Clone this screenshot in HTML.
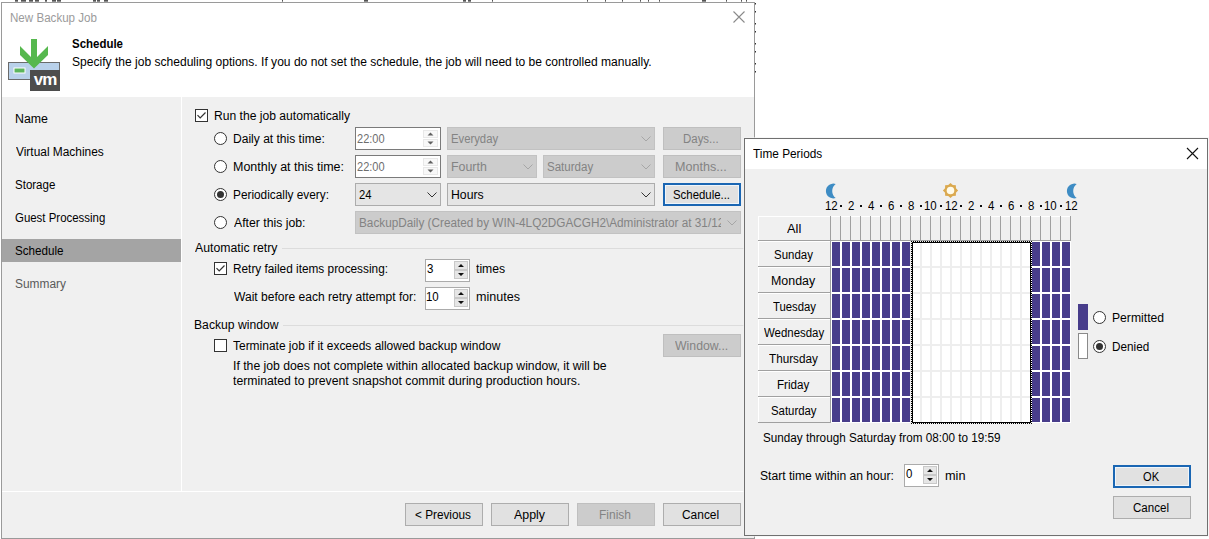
<!DOCTYPE html>
<html><head><meta charset="utf-8"><style>
html,body{margin:0;padding:0;width:1209px;height:539px;overflow:hidden;background:#fff;position:relative}
div{position:absolute;box-sizing:border-box}
svg{display:block}
.t{font-family:"Liberation Sans", sans-serif;font-size:12px;line-height:15px;white-space:pre;transform-origin:0 0}
</style></head><body>
<div style="left:15px;top:0px;width:3px;height:1px;background:#555"></div>
<div style="left:15px;top:1px;width:3px;height:1px;background:#8a8a8a"></div>
<div style="left:21px;top:0px;width:5px;height:1px;background:#555"></div>
<div style="left:21px;top:1px;width:5px;height:1px;background:#8a8a8a"></div>
<div style="left:29px;top:0px;width:4px;height:1px;background:#555"></div>
<div style="left:29px;top:1px;width:4px;height:1px;background:#8a8a8a"></div>
<div style="left:35px;top:0px;width:4px;height:1px;background:#555"></div>
<div style="left:35px;top:1px;width:4px;height:1px;background:#8a8a8a"></div>
<div style="left:45px;top:0px;width:2px;height:1px;background:#555"></div>
<div style="left:45px;top:1px;width:2px;height:1px;background:#8a8a8a"></div>
<div style="left:52px;top:0px;width:4px;height:1px;background:#555"></div>
<div style="left:52px;top:1px;width:4px;height:1px;background:#8a8a8a"></div>
<div style="left:57px;top:0px;width:4px;height:1px;background:#555"></div>
<div style="left:57px;top:1px;width:4px;height:1px;background:#8a8a8a"></div>
<div style="left:93px;top:0px;width:3px;height:1px;background:#555"></div>
<div style="left:93px;top:1px;width:3px;height:1px;background:#8a8a8a"></div>
<div style="left:97px;top:0px;width:3px;height:1px;background:#555"></div>
<div style="left:97px;top:1px;width:3px;height:1px;background:#8a8a8a"></div>
<div style="left:104px;top:0px;width:4px;height:1px;background:#555"></div>
<div style="left:104px;top:1px;width:4px;height:1px;background:#8a8a8a"></div>
<div style="left:282px;top:0px;width:1px;height:1px;background:#555"></div>
<div style="left:282px;top:1px;width:1px;height:1px;background:#8a8a8a"></div>
<div style="left:364px;top:0px;width:4px;height:1px;background:#555"></div>
<div style="left:364px;top:1px;width:4px;height:1px;background:#8a8a8a"></div>
<div style="left:463px;top:0px;width:3px;height:1px;background:#555"></div>
<div style="left:463px;top:1px;width:3px;height:1px;background:#8a8a8a"></div>
<div style="left:468px;top:0px;width:3px;height:1px;background:#555"></div>
<div style="left:468px;top:1px;width:3px;height:1px;background:#8a8a8a"></div>
<div style="left:492px;top:0px;width:1px;height:1px;background:#555"></div>
<div style="left:492px;top:1px;width:1px;height:1px;background:#8a8a8a"></div>
<div style="left:587px;top:0px;width:1px;height:1px;background:#555"></div>
<div style="left:587px;top:1px;width:1px;height:1px;background:#8a8a8a"></div>
<div style="left:605px;top:0px;width:1px;height:1px;background:#555"></div>
<div style="left:605px;top:1px;width:1px;height:1px;background:#8a8a8a"></div>
<div style="left:622px;top:0px;width:1px;height:1px;background:#555"></div>
<div style="left:622px;top:1px;width:1px;height:1px;background:#8a8a8a"></div>
<div style="left:640px;top:0px;width:1px;height:1px;background:#555"></div>
<div style="left:640px;top:1px;width:1px;height:1px;background:#8a8a8a"></div>
<div style="left:648px;top:0px;width:1px;height:1px;background:#555"></div>
<div style="left:648px;top:1px;width:1px;height:1px;background:#8a8a8a"></div>
<div style="left:659px;top:0px;width:1px;height:1px;background:#555"></div>
<div style="left:659px;top:1px;width:1px;height:1px;background:#8a8a8a"></div>
<div style="left:702px;top:0px;width:4px;height:1px;background:#555"></div>
<div style="left:702px;top:1px;width:4px;height:1px;background:#8a8a8a"></div>
<div style="left:726px;top:0px;width:1px;height:1px;background:#555"></div>
<div style="left:726px;top:1px;width:1px;height:1px;background:#8a8a8a"></div>
<div style="left:741px;top:0px;width:1px;height:1px;background:#555"></div>
<div style="left:741px;top:1px;width:1px;height:1px;background:#8a8a8a"></div>
<div style="left:746px;top:0px;width:1px;height:1px;background:#555"></div>
<div style="left:746px;top:1px;width:1px;height:1px;background:#8a8a8a"></div>
<div style="left:1px;top:2px;width:754px;height:537px;background:#fff;border:1px solid #9a9a9a"></div>
<div style="left:755px;top:3px;width:1px;height:1px;background:#333"></div>
<div style="left:755px;top:4px;width:1px;height:1px;background:#999"></div>
<div style="left:755px;top:11px;width:1px;height:1px;background:#333"></div>
<div style="left:755px;top:12px;width:1px;height:1px;background:#999"></div>
<div style="left:755px;top:23px;width:1px;height:1px;background:#333"></div>
<div style="left:755px;top:24px;width:1px;height:1px;background:#999"></div>
<div style="left:755px;top:31px;width:1px;height:1px;background:#333"></div>
<div style="left:755px;top:32px;width:1px;height:1px;background:#999"></div>
<div style="left:755px;top:43px;width:1px;height:1px;background:#333"></div>
<div style="left:755px;top:44px;width:1px;height:1px;background:#999"></div>
<div style="left:755px;top:51px;width:1px;height:1px;background:#333"></div>
<div style="left:755px;top:52px;width:1px;height:1px;background:#999"></div>
<div style="left:755px;top:63px;width:1px;height:1px;background:#333"></div>
<div style="left:755px;top:64px;width:1px;height:1px;background:#999"></div>
<div style="left:755px;top:71px;width:1px;height:1px;background:#333"></div>
<div style="left:755px;top:72px;width:1px;height:1px;background:#999"></div>
<div style="left:2px;top:97px;width:752px;height:441px;background:#f0f0f0"></div>
<div style="left:181px;top:97px;width:1px;height:394px;background:#fff"></div>
<div style="left:2px;top:491px;width:752px;height:1px;background:#fff"></div>
<div style="left:2px;top:239px;width:179px;height:23px;background:#a4a4a4"></div>
<svg style="position:absolute;left:732px;top:10px" width="14" height="14"><path d="M1.5 1.5L12.5 12.5M12.5 1.5L1.5 12.5" stroke="#8a8a8a" stroke-width="1.1" fill="none"/></svg>
<svg style="position:absolute;left:0;top:30px" width="70" height="66" viewBox="0 30 70 66">
<rect x="8.5" y="62.5" width="51" height="17" fill="#b9d1ea" stroke="#6b6b6b" stroke-width="1"/>
<rect x="14" y="68" width="11" height="5" fill="#5cb55c" stroke="#fff" stroke-width="1"/>
<rect x="30" y="70" width="30" height="21" fill="#4d4d4d"/>
<text x="45" y="85" font-family="Liberation Sans" font-weight="bold" font-size="17" fill="#fff" text-anchor="middle" letter-spacing="-1">vm</text>
<path d="M31 39H37V57L48 46V55L34 68.5L20 55V46L31 57Z" fill="#56b84e"/>
</svg>
<svg style="position:absolute;left:195px;top:109px" width="13" height="13"><rect x="0.5" y="0.5" width="12" height="12" fill="#fff" stroke="#333" stroke-width="1"/><path d="M2.5 6.2L5.2 9L10.5 3.5" stroke="#333" stroke-width="1.2" fill="none"/></svg>
<svg style="position:absolute;left:214px;top:132px" width="13" height="13"><circle cx="6.5" cy="6.5" r="6" fill="#fff" stroke="#333" stroke-width="1"/></svg>
<svg style="position:absolute;left:214px;top:160px" width="13" height="13"><circle cx="6.5" cy="6.5" r="6" fill="#fff" stroke="#333" stroke-width="1"/></svg>
<svg style="position:absolute;left:214px;top:188px" width="13" height="13"><circle cx="6.5" cy="6.5" r="6" fill="#fff" stroke="#333" stroke-width="1"/><circle cx="6.5" cy="6.5" r="3.5" fill="#333"/></svg>
<svg style="position:absolute;left:214px;top:216px" width="13" height="13"><circle cx="6.5" cy="6.5" r="6" fill="#fff" stroke="#333" stroke-width="1"/></svg>
<div style="left:355px;top:127px;width:86px;height:23px;background:#fff;border:1px solid #7a7a7a"></div>
<div style="left:423px;top:130px;width:15px;height:8px;background:#f8f8f8;border:1px solid #e8e8e8"></div>
<div style="left:423px;top:139px;width:15px;height:8px;background:#f8f8f8;border:1px solid #e8e8e8"></div>
<svg style="position:absolute;left:0;top:0" width="1209" height="539"><path d="M427.5 135.5L430.5 132.5L433.5 135.5Z M427.5 141.5L430.5 144.5L433.5 141.5Z" fill="#606060"/></svg>
<div style="left:355px;top:155px;width:86px;height:23px;background:#fff;border:1px solid #7a7a7a"></div>
<div style="left:423px;top:158px;width:15px;height:8px;background:#f8f8f8;border:1px solid #e8e8e8"></div>
<div style="left:423px;top:167px;width:15px;height:8px;background:#f8f8f8;border:1px solid #e8e8e8"></div>
<svg style="position:absolute;left:0;top:0" width="1209" height="539"><path d="M427.5 163.5L430.5 160.5L433.5 163.5Z M427.5 169.5L430.5 172.5L433.5 169.5Z" fill="#606060"/></svg>
<div style="left:447px;top:127px;width:208px;height:23px;background:#cccccc;border:1px solid #c2c2c2"></div>
<svg style="position:absolute;left:641px;top:136px" width="10" height="6"><path d="M0.5 0.5L5 5L9.5 0.5" stroke="#a6a6a6" stroke-width="1" fill="none"/></svg>
<div style="left:663px;top:127px;width:78px;height:23px;background:#cccccc;border:1px solid #bfbfbf"></div>
<div style="left:447px;top:155px;width:90px;height:23px;background:#cccccc;border:1px solid #c2c2c2"></div>
<svg style="position:absolute;left:523px;top:164px" width="10" height="6"><path d="M0.5 0.5L5 5L9.5 0.5" stroke="#a6a6a6" stroke-width="1" fill="none"/></svg>
<div style="left:543px;top:155px;width:112px;height:23px;background:#cccccc;border:1px solid #c2c2c2"></div>
<svg style="position:absolute;left:641px;top:164px" width="10" height="6"><path d="M0.5 0.5L5 5L9.5 0.5" stroke="#a6a6a6" stroke-width="1" fill="none"/></svg>
<div style="left:663px;top:155px;width:78px;height:23px;background:#cccccc;border:1px solid #bfbfbf"></div>
<div style="left:355px;top:183px;width:86px;height:23px;background:#e5e5e5;border:1px solid #acacac"></div>
<svg style="position:absolute;left:427px;top:192px" width="10" height="6"><path d="M0.5 0.5L5 5L9.5 0.5" stroke="#333" stroke-width="1" fill="none"/></svg>
<div style="left:447px;top:183px;width:208px;height:23px;background:#e5e5e5;border:1px solid #acacac"></div>
<svg style="position:absolute;left:641px;top:192px" width="10" height="6"><path d="M0.5 0.5L5 5L9.5 0.5" stroke="#333" stroke-width="1" fill="none"/></svg>
<div style="left:663px;top:183px;width:78px;height:23px;background:#e5f1fb;border:2px solid #1a66b3"></div>
<div style="left:665px;top:185px;width:74px;height:19px;background:#e1e1e1;border:1px solid #eef5fb"></div>
<div style="left:355px;top:211px;width:386px;height:23px;background:#cccccc;border:1px solid #c2c2c2"></div>
<svg style="position:absolute;left:727px;top:220px" width="10" height="6"><path d="M0.5 0.5L5 5L9.5 0.5" stroke="#a6a6a6" stroke-width="1" fill="none"/></svg>
<div style="left:282px;top:248px;width:462px;height:1px;background:#dcdcdc"></div>
<svg style="position:absolute;left:214px;top:262px" width="13" height="13"><rect x="0.5" y="0.5" width="12" height="12" fill="#fff" stroke="#333" stroke-width="1"/><path d="M2.5 6.2L5.2 9L10.5 3.5" stroke="#333" stroke-width="1.2" fill="none"/></svg>
<div style="left:425px;top:259px;width:45px;height:23px;background:#fff;border:1px solid #ababab"></div>
<div style="left:454px;top:261px;width:14px;height:9px;background:#e6e6e6;border:1px solid #c9c9c9"></div>
<div style="left:454px;top:270px;width:14px;height:9px;background:#e6e6e6;border:1px solid #c9c9c9"></div>
<svg style="position:absolute;left:0;top:0" width="1209" height="539"><path d="M458.0 267.0L461.0 264.0L464.0 267.0Z M458.0 273.0L461.0 276.0L464.0 273.0Z" fill="#111"/></svg>
<div style="left:425px;top:287px;width:45px;height:23px;background:#fff;border:1px solid #ababab"></div>
<div style="left:454px;top:289px;width:14px;height:9px;background:#e6e6e6;border:1px solid #c9c9c9"></div>
<div style="left:454px;top:298px;width:14px;height:9px;background:#e6e6e6;border:1px solid #c9c9c9"></div>
<svg style="position:absolute;left:0;top:0" width="1209" height="539"><path d="M458.0 295.0L461.0 292.0L464.0 295.0Z M458.0 301.0L461.0 304.0L464.0 301.0Z" fill="#111"/></svg>
<div style="left:283px;top:325px;width:461px;height:1px;background:#dcdcdc"></div>
<svg style="position:absolute;left:214px;top:339px" width="13" height="13"><rect x="0.5" y="0.5" width="12" height="12" fill="#fff" stroke="#333" stroke-width="1"/></svg>
<div style="left:663px;top:334px;width:78px;height:23px;background:#cccccc;border:1px solid #bfbfbf"></div>
<div style="left:405px;top:503px;width:78px;height:23px;background:#e1e1e1;border:1px solid #adadad"></div>
<div style="left:491px;top:503px;width:78px;height:23px;background:#e1e1e1;border:1px solid #adadad"></div>
<div style="left:577px;top:503px;width:78px;height:23px;background:#cccccc;border:1px solid #bfbfbf"></div>
<div style="left:663px;top:503px;width:78px;height:23px;background:#e1e1e1;border:1px solid #adadad"></div>
<div style="left:743px;top:137px;width:466px;height:400px;background:#f4f4f4;opacity:0.6"></div>
<div style="left:744px;top:138px;width:464px;height:398px;background:#fff;border:1px solid #707070"></div>
<div style="left:745px;top:169px;width:462px;height:366px;background:#f0f0f0"></div>
<svg style="position:absolute;left:1186px;top:147px" width="13" height="13"><path d="M1 1L12 12M12 1L1 12" stroke="#111" stroke-width="1.1" fill="none"/></svg>
<div style="left:840px;top:205px;width:2px;height:2px;background:#111"></div>
<div style="left:860px;top:205px;width:2px;height:2px;background:#111"></div>
<div style="left:880px;top:205px;width:2px;height:2px;background:#111"></div>
<div style="left:900px;top:205px;width:2px;height:2px;background:#111"></div>
<div style="left:920px;top:205px;width:2px;height:2px;background:#111"></div>
<div style="left:940px;top:205px;width:2px;height:2px;background:#111"></div>
<div style="left:960px;top:205px;width:2px;height:2px;background:#111"></div>
<div style="left:980px;top:205px;width:2px;height:2px;background:#111"></div>
<div style="left:1000px;top:205px;width:2px;height:2px;background:#111"></div>
<div style="left:1020px;top:205px;width:2px;height:2px;background:#111"></div>
<div style="left:1040px;top:205px;width:2px;height:2px;background:#111"></div>
<div style="left:1060px;top:205px;width:2px;height:2px;background:#111"></div>
<svg style="position:absolute;left:824px;top:182px" width="14" height="18" viewBox="0 0 14 18"><path d="M11.7 2A7.4 7.4 0 1 0 11.7 16A8.75 8.75 0 0 1 11.7 2Z" fill="#3e8cc4"/></svg>
<svg style="position:absolute;left:1065px;top:182px" width="14" height="18" viewBox="0 0 14 18"><path d="M11.7 2A7.4 7.4 0 1 0 11.7 16A8.75 8.75 0 0 1 11.7 2Z" fill="#3e8cc4"/></svg>
<svg style="position:absolute;left:942px;top:182px" width="17" height="17" viewBox="0 0 17 17">
<polygon points="8.50,0.90 10.76,3.05 13.87,3.13 13.95,6.24 16.10,8.50 13.95,10.76 13.87,13.87 10.76,13.95 8.50,16.10 6.24,13.95 3.13,13.87 3.05,10.76 0.90,8.50 3.05,6.24 3.13,3.13 6.24,3.05" fill="#dba94f"/>
<circle cx="8.5" cy="8.5" r="3.8" fill="#fffbea"/></svg>
<div style="left:758px;top:216px;width:73px;height:207px;background:#a0a0a0"></div>
<div style="left:758px;top:216px;width:72px;height:24px;background:#f0f0f0;border-top:1px solid #fff;border-left:1px solid #fff"></div>
<div style="left:758px;top:241px;width:72px;height:25px;background:#f0f0f0;border-top:1px solid #fff;border-left:1px solid #fff"></div>
<div style="left:758px;top:267px;width:72px;height:25px;background:#f0f0f0;border-top:1px solid #fff;border-left:1px solid #fff"></div>
<div style="left:758px;top:293px;width:72px;height:25px;background:#f0f0f0;border-top:1px solid #fff;border-left:1px solid #fff"></div>
<div style="left:758px;top:319px;width:72px;height:25px;background:#f0f0f0;border-top:1px solid #fff;border-left:1px solid #fff"></div>
<div style="left:758px;top:345px;width:72px;height:25px;background:#f0f0f0;border-top:1px solid #fff;border-left:1px solid #fff"></div>
<div style="left:758px;top:371px;width:72px;height:25px;background:#f0f0f0;border-top:1px solid #fff;border-left:1px solid #fff"></div>
<div style="left:758px;top:397px;width:72px;height:25px;background:#f0f0f0;border-top:1px solid #fff;border-left:1px solid #fff"></div>
<div style="left:830px;top:216px;width:241px;height:25px;background:#f0f0f0;border-top:1px solid #fff"></div>
<div style="left:830px;top:216px;width:1px;height:25px;background:#a0a0a0"></div>
<div style="left:840px;top:216px;width:1px;height:25px;background:#a0a0a0"></div>
<div style="left:850px;top:216px;width:1px;height:25px;background:#a0a0a0"></div>
<div style="left:860px;top:216px;width:1px;height:25px;background:#a0a0a0"></div>
<div style="left:870px;top:216px;width:1px;height:25px;background:#a0a0a0"></div>
<div style="left:880px;top:216px;width:1px;height:25px;background:#a0a0a0"></div>
<div style="left:890px;top:216px;width:1px;height:25px;background:#a0a0a0"></div>
<div style="left:900px;top:216px;width:1px;height:25px;background:#a0a0a0"></div>
<div style="left:910px;top:216px;width:1px;height:25px;background:#a0a0a0"></div>
<div style="left:920px;top:216px;width:1px;height:25px;background:#a0a0a0"></div>
<div style="left:930px;top:216px;width:1px;height:25px;background:#a0a0a0"></div>
<div style="left:940px;top:216px;width:1px;height:25px;background:#a0a0a0"></div>
<div style="left:950px;top:216px;width:1px;height:25px;background:#a0a0a0"></div>
<div style="left:960px;top:216px;width:1px;height:25px;background:#a0a0a0"></div>
<div style="left:970px;top:216px;width:1px;height:25px;background:#a0a0a0"></div>
<div style="left:980px;top:216px;width:1px;height:25px;background:#a0a0a0"></div>
<div style="left:990px;top:216px;width:1px;height:25px;background:#a0a0a0"></div>
<div style="left:1000px;top:216px;width:1px;height:25px;background:#a0a0a0"></div>
<div style="left:1010px;top:216px;width:1px;height:25px;background:#a0a0a0"></div>
<div style="left:1020px;top:216px;width:1px;height:25px;background:#a0a0a0"></div>
<div style="left:1030px;top:216px;width:1px;height:25px;background:#a0a0a0"></div>
<div style="left:1040px;top:216px;width:1px;height:25px;background:#a0a0a0"></div>
<div style="left:1050px;top:216px;width:1px;height:25px;background:#a0a0a0"></div>
<div style="left:1060px;top:216px;width:1px;height:25px;background:#a0a0a0"></div>
<div style="left:1070px;top:216px;width:1px;height:25px;background:#a0a0a0"></div>
<div style="left:830px;top:240px;width:241px;height:183px;background:#fff"></div>
<div style="left:910px;top:240px;width:120px;height:183px;background:#eeeeee"></div>
<div style="left:912px;top:242px;width:8px;height:24px;background:#fff"></div>
<div style="left:922px;top:242px;width:8px;height:24px;background:#fff"></div>
<div style="left:932px;top:242px;width:8px;height:24px;background:#fff"></div>
<div style="left:942px;top:242px;width:8px;height:24px;background:#fff"></div>
<div style="left:952px;top:242px;width:8px;height:24px;background:#fff"></div>
<div style="left:962px;top:242px;width:8px;height:24px;background:#fff"></div>
<div style="left:972px;top:242px;width:8px;height:24px;background:#fff"></div>
<div style="left:982px;top:242px;width:8px;height:24px;background:#fff"></div>
<div style="left:992px;top:242px;width:8px;height:24px;background:#fff"></div>
<div style="left:1002px;top:242px;width:8px;height:24px;background:#fff"></div>
<div style="left:1012px;top:242px;width:8px;height:24px;background:#fff"></div>
<div style="left:1022px;top:242px;width:8px;height:24px;background:#fff"></div>
<div style="left:912px;top:268px;width:8px;height:24px;background:#fff"></div>
<div style="left:922px;top:268px;width:8px;height:24px;background:#fff"></div>
<div style="left:932px;top:268px;width:8px;height:24px;background:#fff"></div>
<div style="left:942px;top:268px;width:8px;height:24px;background:#fff"></div>
<div style="left:952px;top:268px;width:8px;height:24px;background:#fff"></div>
<div style="left:962px;top:268px;width:8px;height:24px;background:#fff"></div>
<div style="left:972px;top:268px;width:8px;height:24px;background:#fff"></div>
<div style="left:982px;top:268px;width:8px;height:24px;background:#fff"></div>
<div style="left:992px;top:268px;width:8px;height:24px;background:#fff"></div>
<div style="left:1002px;top:268px;width:8px;height:24px;background:#fff"></div>
<div style="left:1012px;top:268px;width:8px;height:24px;background:#fff"></div>
<div style="left:1022px;top:268px;width:8px;height:24px;background:#fff"></div>
<div style="left:912px;top:294px;width:8px;height:24px;background:#fff"></div>
<div style="left:922px;top:294px;width:8px;height:24px;background:#fff"></div>
<div style="left:932px;top:294px;width:8px;height:24px;background:#fff"></div>
<div style="left:942px;top:294px;width:8px;height:24px;background:#fff"></div>
<div style="left:952px;top:294px;width:8px;height:24px;background:#fff"></div>
<div style="left:962px;top:294px;width:8px;height:24px;background:#fff"></div>
<div style="left:972px;top:294px;width:8px;height:24px;background:#fff"></div>
<div style="left:982px;top:294px;width:8px;height:24px;background:#fff"></div>
<div style="left:992px;top:294px;width:8px;height:24px;background:#fff"></div>
<div style="left:1002px;top:294px;width:8px;height:24px;background:#fff"></div>
<div style="left:1012px;top:294px;width:8px;height:24px;background:#fff"></div>
<div style="left:1022px;top:294px;width:8px;height:24px;background:#fff"></div>
<div style="left:912px;top:320px;width:8px;height:24px;background:#fff"></div>
<div style="left:922px;top:320px;width:8px;height:24px;background:#fff"></div>
<div style="left:932px;top:320px;width:8px;height:24px;background:#fff"></div>
<div style="left:942px;top:320px;width:8px;height:24px;background:#fff"></div>
<div style="left:952px;top:320px;width:8px;height:24px;background:#fff"></div>
<div style="left:962px;top:320px;width:8px;height:24px;background:#fff"></div>
<div style="left:972px;top:320px;width:8px;height:24px;background:#fff"></div>
<div style="left:982px;top:320px;width:8px;height:24px;background:#fff"></div>
<div style="left:992px;top:320px;width:8px;height:24px;background:#fff"></div>
<div style="left:1002px;top:320px;width:8px;height:24px;background:#fff"></div>
<div style="left:1012px;top:320px;width:8px;height:24px;background:#fff"></div>
<div style="left:1022px;top:320px;width:8px;height:24px;background:#fff"></div>
<div style="left:912px;top:346px;width:8px;height:24px;background:#fff"></div>
<div style="left:922px;top:346px;width:8px;height:24px;background:#fff"></div>
<div style="left:932px;top:346px;width:8px;height:24px;background:#fff"></div>
<div style="left:942px;top:346px;width:8px;height:24px;background:#fff"></div>
<div style="left:952px;top:346px;width:8px;height:24px;background:#fff"></div>
<div style="left:962px;top:346px;width:8px;height:24px;background:#fff"></div>
<div style="left:972px;top:346px;width:8px;height:24px;background:#fff"></div>
<div style="left:982px;top:346px;width:8px;height:24px;background:#fff"></div>
<div style="left:992px;top:346px;width:8px;height:24px;background:#fff"></div>
<div style="left:1002px;top:346px;width:8px;height:24px;background:#fff"></div>
<div style="left:1012px;top:346px;width:8px;height:24px;background:#fff"></div>
<div style="left:1022px;top:346px;width:8px;height:24px;background:#fff"></div>
<div style="left:912px;top:372px;width:8px;height:24px;background:#fff"></div>
<div style="left:922px;top:372px;width:8px;height:24px;background:#fff"></div>
<div style="left:932px;top:372px;width:8px;height:24px;background:#fff"></div>
<div style="left:942px;top:372px;width:8px;height:24px;background:#fff"></div>
<div style="left:952px;top:372px;width:8px;height:24px;background:#fff"></div>
<div style="left:962px;top:372px;width:8px;height:24px;background:#fff"></div>
<div style="left:972px;top:372px;width:8px;height:24px;background:#fff"></div>
<div style="left:982px;top:372px;width:8px;height:24px;background:#fff"></div>
<div style="left:992px;top:372px;width:8px;height:24px;background:#fff"></div>
<div style="left:1002px;top:372px;width:8px;height:24px;background:#fff"></div>
<div style="left:1012px;top:372px;width:8px;height:24px;background:#fff"></div>
<div style="left:1022px;top:372px;width:8px;height:24px;background:#fff"></div>
<div style="left:912px;top:398px;width:8px;height:24px;background:#fff"></div>
<div style="left:922px;top:398px;width:8px;height:24px;background:#fff"></div>
<div style="left:932px;top:398px;width:8px;height:24px;background:#fff"></div>
<div style="left:942px;top:398px;width:8px;height:24px;background:#fff"></div>
<div style="left:952px;top:398px;width:8px;height:24px;background:#fff"></div>
<div style="left:962px;top:398px;width:8px;height:24px;background:#fff"></div>
<div style="left:972px;top:398px;width:8px;height:24px;background:#fff"></div>
<div style="left:982px;top:398px;width:8px;height:24px;background:#fff"></div>
<div style="left:992px;top:398px;width:8px;height:24px;background:#fff"></div>
<div style="left:1002px;top:398px;width:8px;height:24px;background:#fff"></div>
<div style="left:1012px;top:398px;width:8px;height:24px;background:#fff"></div>
<div style="left:1022px;top:398px;width:8px;height:24px;background:#fff"></div>
<div style="left:832px;top:242px;width:8px;height:24px;background:#483d8b"></div>
<div style="left:842px;top:242px;width:8px;height:24px;background:#483d8b"></div>
<div style="left:852px;top:242px;width:8px;height:24px;background:#483d8b"></div>
<div style="left:862px;top:242px;width:8px;height:24px;background:#483d8b"></div>
<div style="left:872px;top:242px;width:8px;height:24px;background:#483d8b"></div>
<div style="left:882px;top:242px;width:8px;height:24px;background:#483d8b"></div>
<div style="left:892px;top:242px;width:8px;height:24px;background:#483d8b"></div>
<div style="left:902px;top:242px;width:8px;height:24px;background:#483d8b"></div>
<div style="left:1032px;top:242px;width:8px;height:24px;background:#483d8b"></div>
<div style="left:1042px;top:242px;width:8px;height:24px;background:#483d8b"></div>
<div style="left:1052px;top:242px;width:8px;height:24px;background:#483d8b"></div>
<div style="left:1062px;top:242px;width:8px;height:24px;background:#483d8b"></div>
<div style="left:832px;top:268px;width:8px;height:24px;background:#483d8b"></div>
<div style="left:842px;top:268px;width:8px;height:24px;background:#483d8b"></div>
<div style="left:852px;top:268px;width:8px;height:24px;background:#483d8b"></div>
<div style="left:862px;top:268px;width:8px;height:24px;background:#483d8b"></div>
<div style="left:872px;top:268px;width:8px;height:24px;background:#483d8b"></div>
<div style="left:882px;top:268px;width:8px;height:24px;background:#483d8b"></div>
<div style="left:892px;top:268px;width:8px;height:24px;background:#483d8b"></div>
<div style="left:902px;top:268px;width:8px;height:24px;background:#483d8b"></div>
<div style="left:1032px;top:268px;width:8px;height:24px;background:#483d8b"></div>
<div style="left:1042px;top:268px;width:8px;height:24px;background:#483d8b"></div>
<div style="left:1052px;top:268px;width:8px;height:24px;background:#483d8b"></div>
<div style="left:1062px;top:268px;width:8px;height:24px;background:#483d8b"></div>
<div style="left:832px;top:294px;width:8px;height:24px;background:#483d8b"></div>
<div style="left:842px;top:294px;width:8px;height:24px;background:#483d8b"></div>
<div style="left:852px;top:294px;width:8px;height:24px;background:#483d8b"></div>
<div style="left:862px;top:294px;width:8px;height:24px;background:#483d8b"></div>
<div style="left:872px;top:294px;width:8px;height:24px;background:#483d8b"></div>
<div style="left:882px;top:294px;width:8px;height:24px;background:#483d8b"></div>
<div style="left:892px;top:294px;width:8px;height:24px;background:#483d8b"></div>
<div style="left:902px;top:294px;width:8px;height:24px;background:#483d8b"></div>
<div style="left:1032px;top:294px;width:8px;height:24px;background:#483d8b"></div>
<div style="left:1042px;top:294px;width:8px;height:24px;background:#483d8b"></div>
<div style="left:1052px;top:294px;width:8px;height:24px;background:#483d8b"></div>
<div style="left:1062px;top:294px;width:8px;height:24px;background:#483d8b"></div>
<div style="left:832px;top:320px;width:8px;height:24px;background:#483d8b"></div>
<div style="left:842px;top:320px;width:8px;height:24px;background:#483d8b"></div>
<div style="left:852px;top:320px;width:8px;height:24px;background:#483d8b"></div>
<div style="left:862px;top:320px;width:8px;height:24px;background:#483d8b"></div>
<div style="left:872px;top:320px;width:8px;height:24px;background:#483d8b"></div>
<div style="left:882px;top:320px;width:8px;height:24px;background:#483d8b"></div>
<div style="left:892px;top:320px;width:8px;height:24px;background:#483d8b"></div>
<div style="left:902px;top:320px;width:8px;height:24px;background:#483d8b"></div>
<div style="left:1032px;top:320px;width:8px;height:24px;background:#483d8b"></div>
<div style="left:1042px;top:320px;width:8px;height:24px;background:#483d8b"></div>
<div style="left:1052px;top:320px;width:8px;height:24px;background:#483d8b"></div>
<div style="left:1062px;top:320px;width:8px;height:24px;background:#483d8b"></div>
<div style="left:832px;top:346px;width:8px;height:24px;background:#483d8b"></div>
<div style="left:842px;top:346px;width:8px;height:24px;background:#483d8b"></div>
<div style="left:852px;top:346px;width:8px;height:24px;background:#483d8b"></div>
<div style="left:862px;top:346px;width:8px;height:24px;background:#483d8b"></div>
<div style="left:872px;top:346px;width:8px;height:24px;background:#483d8b"></div>
<div style="left:882px;top:346px;width:8px;height:24px;background:#483d8b"></div>
<div style="left:892px;top:346px;width:8px;height:24px;background:#483d8b"></div>
<div style="left:902px;top:346px;width:8px;height:24px;background:#483d8b"></div>
<div style="left:1032px;top:346px;width:8px;height:24px;background:#483d8b"></div>
<div style="left:1042px;top:346px;width:8px;height:24px;background:#483d8b"></div>
<div style="left:1052px;top:346px;width:8px;height:24px;background:#483d8b"></div>
<div style="left:1062px;top:346px;width:8px;height:24px;background:#483d8b"></div>
<div style="left:832px;top:372px;width:8px;height:24px;background:#483d8b"></div>
<div style="left:842px;top:372px;width:8px;height:24px;background:#483d8b"></div>
<div style="left:852px;top:372px;width:8px;height:24px;background:#483d8b"></div>
<div style="left:862px;top:372px;width:8px;height:24px;background:#483d8b"></div>
<div style="left:872px;top:372px;width:8px;height:24px;background:#483d8b"></div>
<div style="left:882px;top:372px;width:8px;height:24px;background:#483d8b"></div>
<div style="left:892px;top:372px;width:8px;height:24px;background:#483d8b"></div>
<div style="left:902px;top:372px;width:8px;height:24px;background:#483d8b"></div>
<div style="left:1032px;top:372px;width:8px;height:24px;background:#483d8b"></div>
<div style="left:1042px;top:372px;width:8px;height:24px;background:#483d8b"></div>
<div style="left:1052px;top:372px;width:8px;height:24px;background:#483d8b"></div>
<div style="left:1062px;top:372px;width:8px;height:24px;background:#483d8b"></div>
<div style="left:832px;top:398px;width:8px;height:24px;background:#483d8b"></div>
<div style="left:842px;top:398px;width:8px;height:24px;background:#483d8b"></div>
<div style="left:852px;top:398px;width:8px;height:24px;background:#483d8b"></div>
<div style="left:862px;top:398px;width:8px;height:24px;background:#483d8b"></div>
<div style="left:872px;top:398px;width:8px;height:24px;background:#483d8b"></div>
<div style="left:882px;top:398px;width:8px;height:24px;background:#483d8b"></div>
<div style="left:892px;top:398px;width:8px;height:24px;background:#483d8b"></div>
<div style="left:902px;top:398px;width:8px;height:24px;background:#483d8b"></div>
<div style="left:1032px;top:398px;width:8px;height:24px;background:#483d8b"></div>
<div style="left:1042px;top:398px;width:8px;height:24px;background:#483d8b"></div>
<div style="left:1052px;top:398px;width:8px;height:24px;background:#483d8b"></div>
<div style="left:1062px;top:398px;width:8px;height:24px;background:#483d8b"></div>
<div style="left:830px;top:240px;width:241px;height:1px;background:#a0a0a0"></div>
<div style="left:830px;top:240px;width:1px;height:183px;background:#a0a0a0"></div>
<div style="left:912px;top:242px;width:119px;height:181px;border:1px solid #000"></div>
<div style="left:911px;top:241px;width:121px;height:183px;border:1px dotted #000"></div>
<div style="left:1078px;top:304px;width:10px;height:26px;background:#483d8b"></div>
<div style="left:1078px;top:333px;width:10px;height:26px;background:#fff;border:1px solid #8a8a8a"></div>
<svg style="position:absolute;left:1093px;top:311px" width="13" height="13"><circle cx="6.5" cy="6.5" r="6" fill="#fff" stroke="#333" stroke-width="1"/></svg>
<svg style="position:absolute;left:1093px;top:340px" width="13" height="13"><circle cx="6.5" cy="6.5" r="6" fill="#fff" stroke="#333" stroke-width="1"/><circle cx="6.5" cy="6.5" r="3.5" fill="#333"/></svg>
<div style="left:904px;top:464px;width:35px;height:23px;background:#fff;border:1px solid #ababab"></div>
<div style="left:923px;top:466px;width:14px;height:9px;background:#e6e6e6;border:1px solid #c9c9c9"></div>
<div style="left:923px;top:475px;width:14px;height:9px;background:#e6e6e6;border:1px solid #c9c9c9"></div>
<svg style="position:absolute;left:0;top:0" width="1209" height="539"><path d="M927.0 472.0L930.0 469.0L933.0 472.0Z M927.0 478.0L930.0 481.0L933.0 478.0Z" fill="#111"/></svg>
<div style="left:1113px;top:465px;width:78px;height:23px;background:#e5f1fb;border:2px solid #1a66b3"></div>
<div style="left:1115px;top:467px;width:74px;height:19px;background:#e1e1e1;border:1px solid #eef5fb"></div>
<div style="left:1113px;top:496px;width:78px;height:23px;background:#e1e1e1;border:1px solid #adadad"></div>
<div class="t" style="left:9.89px;top:11px;transform:scaleX(0.9659);color:#9b9b9b">New Backup Job</div>
<div class="t" style="left:72.22px;top:37px;transform:scaleX(0.9553);color:#000;font-weight:bold">Schedule</div>
<div class="t" style="left:71.62px;top:55px;transform:scaleX(1.0050);color:#000">Specify the job scheduling options. If you do not set the schedule, the job will need to be controlled manually.</div>
<div class="t" style="left:14.63px;top:112px;transform:scaleX(1.0299);color:#000">Name</div>
<div class="t" style="left:15.60px;top:145px;transform:scaleX(0.9919);color:#000">Virtual Machines</div>
<div class="t" style="left:15.24px;top:178px;transform:scaleX(0.9595);color:#000">Storage</div>
<div class="t" style="left:15.06px;top:211px;transform:scaleX(0.9532);color:#000">Guest Processing</div>
<div class="t" style="left:14.84px;top:244px;transform:scaleX(0.9700);color:#000">Schedule</div>
<div class="t" style="left:14.83px;top:277px;transform:scaleX(0.9928);color:#5a5a5a">Summary</div>
<div class="t" style="left:213.65px;top:109px;transform:scaleX(1.0097);color:#000">Run the job automatically</div>
<div class="t" style="left:232.56px;top:132px;transform:scaleX(1.0041);color:#000">Daily at this time:</div>
<div class="t" style="left:232.52px;top:160px;transform:scaleX(1.0403);color:#000">Monthly at this time:</div>
<div class="t" style="left:232.58px;top:188px;transform:scaleX(0.9858);color:#000">Periodically every:</div>
<div class="t" style="left:233.50px;top:216px;transform:scaleX(1.0211);color:#000">After this job:</div>
<div class="t" style="left:356.68px;top:132px;transform:scaleX(0.9188);color:#6d6d6d">22:00</div>
<div class="t" style="left:356.68px;top:160px;transform:scaleX(0.9188);color:#6d6d6d">22:00</div>
<div class="t" style="left:450.62px;top:132px;transform:scaleX(0.9412);color:#838383">Everyday</div>
<div class="t" style="left:683.11px;top:132px;transform:scaleX(0.9541);color:#838383">Days...</div>
<div class="t" style="left:450.53px;top:160px;transform:scaleX(1.0311);color:#838383">Fourth</div>
<div class="t" style="left:546.84px;top:160px;transform:scaleX(0.9611);color:#838383">Saturday</div>
<div class="t" style="left:674.92px;top:160px;transform:scaleX(1.0458);color:#838383">Months...</div>
<div class="t" style="left:359.07px;top:188px;transform:scaleX(0.9370);color:#000">24</div>
<div class="t" style="left:450.54px;top:188px;transform:scaleX(1.0196);color:#000">Hours</div>
<div class="t" style="left:673.04px;top:188px;transform:scaleX(0.9491);color:#000">Schedule...</div>
<div style="left:355px;top:214px;width:366px;height:19px;overflow:hidden"><div class="t" style="left:3.68px;top:2px;transform:scaleX(0.9797);color:#838383">BackupDaily (Created by WIN-4LQ2DGACGH2\Administrator at 31/12/2019 10:00:00)</div></div>
<div class="t" style="left:195.40px;top:241px;transform:scaleX(1.0224);color:#000">Automatic retry</div>
<div class="t" style="left:232.68px;top:262px;transform:scaleX(0.9847);color:#000">Retry failed items processing:</div>
<div class="t" style="left:426.94px;top:262px;transform:scaleX(0.9550);color:#000">3</div>
<div class="t" style="left:476.30px;top:262px;transform:scaleX(1.0179);color:#000">times</div>
<div class="t" style="left:233.60px;top:290px;transform:scaleX(1.0042);color:#000">Wait before each retry attempt for:</div>
<div class="t" style="left:426.28px;top:290px;transform:scaleX(0.9550);color:#000">10</div>
<div class="t" style="left:475.52px;top:290px;transform:scaleX(1.0466);color:#000">minutes</div>
<div class="t" style="left:194.45px;top:318px;transform:scaleX(1.0135);color:#000">Backup window</div>
<div class="t" style="left:233.41px;top:339px;transform:scaleX(0.9970);color:#000">Terminate job if it exceeds allowed backup window</div>
<div class="t" style="left:675.30px;top:339px;transform:scaleX(1.0229);color:#838383">Window...</div>
<div class="t" style="left:232.65px;top:359px;transform:scaleX(1.0185);color:#000">If the job does not complete within allocated backup window, it will be</div>
<div class="t" style="left:233.30px;top:374px;transform:scaleX(1.0209);color:#000">terminated to prevent snapshot commit during production hours.</div>
<div class="t" style="left:415.45px;top:508px;transform:scaleX(0.9805);color:#000">&lt; Previous</div>
<div class="t" style="left:514.30px;top:508px;transform:scaleX(1.0327);color:#000">Apply</div>
<div class="t" style="left:599.26px;top:508px;transform:scaleX(1.0001);color:#838383">Finish</div>
<div class="t" style="left:682.44px;top:508px;transform:scaleX(0.9944);color:#000">Cancel</div>
<div class="t" style="left:753.02px;top:147px;transform:scaleX(0.9859);color:#000">Time Periods</div>
<div class="t" style="left:824.50px;top:199px;transform:scaleX(0.9550);color:#000">12</div>
<div class="t" style="left:847.78px;top:199px;transform:scaleX(0.9550);color:#000">2</div>
<div class="t" style="left:867.87px;top:199px;transform:scaleX(0.9550);color:#000">4</div>
<div class="t" style="left:887.78px;top:199px;transform:scaleX(0.9550);color:#000">6</div>
<div class="t" style="left:907.87px;top:199px;transform:scaleX(0.9550);color:#000">8</div>
<div class="t" style="left:924.41px;top:199px;transform:scaleX(0.9550);color:#000">10</div>
<div class="t" style="left:944.50px;top:199px;transform:scaleX(0.9550);color:#000">12</div>
<div class="t" style="left:967.78px;top:199px;transform:scaleX(0.9550);color:#000">2</div>
<div class="t" style="left:987.87px;top:199px;transform:scaleX(0.9550);color:#000">4</div>
<div class="t" style="left:1007.78px;top:199px;transform:scaleX(0.9550);color:#000">6</div>
<div class="t" style="left:1027.87px;top:199px;transform:scaleX(0.9550);color:#000">8</div>
<div class="t" style="left:1044.41px;top:199px;transform:scaleX(0.9550);color:#000">10</div>
<div class="t" style="left:1064.50px;top:199px;transform:scaleX(0.9550);color:#000">12</div>
<div class="t" style="left:787.00px;top:222px;transform:scaleX(1.0682);color:#000">All</div>
<div class="t" style="left:774.04px;top:248px;transform:scaleX(0.9548);color:#000">Sunday</div>
<div class="t" style="left:771.43px;top:274px;transform:scaleX(1.0346);color:#000">Monday</div>
<div class="t" style="left:772.62px;top:300px;transform:scaleX(0.9429);color:#000">Tuesday</div>
<div class="t" style="left:763.50px;top:326px;transform:scaleX(0.9517);color:#000">Wednesday</div>
<div class="t" style="left:769.32px;top:352px;transform:scaleX(0.9752);color:#000">Thursday</div>
<div class="t" style="left:777.39px;top:378px;transform:scaleX(0.9691);color:#000">Friday</div>
<div class="t" style="left:771.24px;top:404px;transform:scaleX(0.9485);color:#000">Saturday</div>
<div class="t" style="left:1111.75px;top:311px;transform:scaleX(1.0133);color:#000">Permitted</div>
<div class="t" style="left:1111.78px;top:340px;transform:scaleX(0.9776);color:#000">Denied</div>
<div class="t" style="left:763.03px;top:431px;transform:scaleX(0.9755);color:#000">Sunday through Saturday from 08:00 to 19:59</div>
<div class="t" style="left:760.12px;top:469px;transform:scaleX(1.0094);color:#000">Start time within an hour:</div>
<div class="t" style="left:905.64px;top:467px;transform:scaleX(0.9550);color:#000">0</div>
<div class="t" style="left:945.20px;top:469px;transform:scaleX(1.0607);color:#000">min</div>
<div class="t" style="left:1143.08px;top:470px;transform:scaleX(0.9251);color:#000">OK</div>
<div class="t" style="left:1133.26px;top:501px;transform:scaleX(0.9639);color:#000">Cancel</div>
</body></html>
